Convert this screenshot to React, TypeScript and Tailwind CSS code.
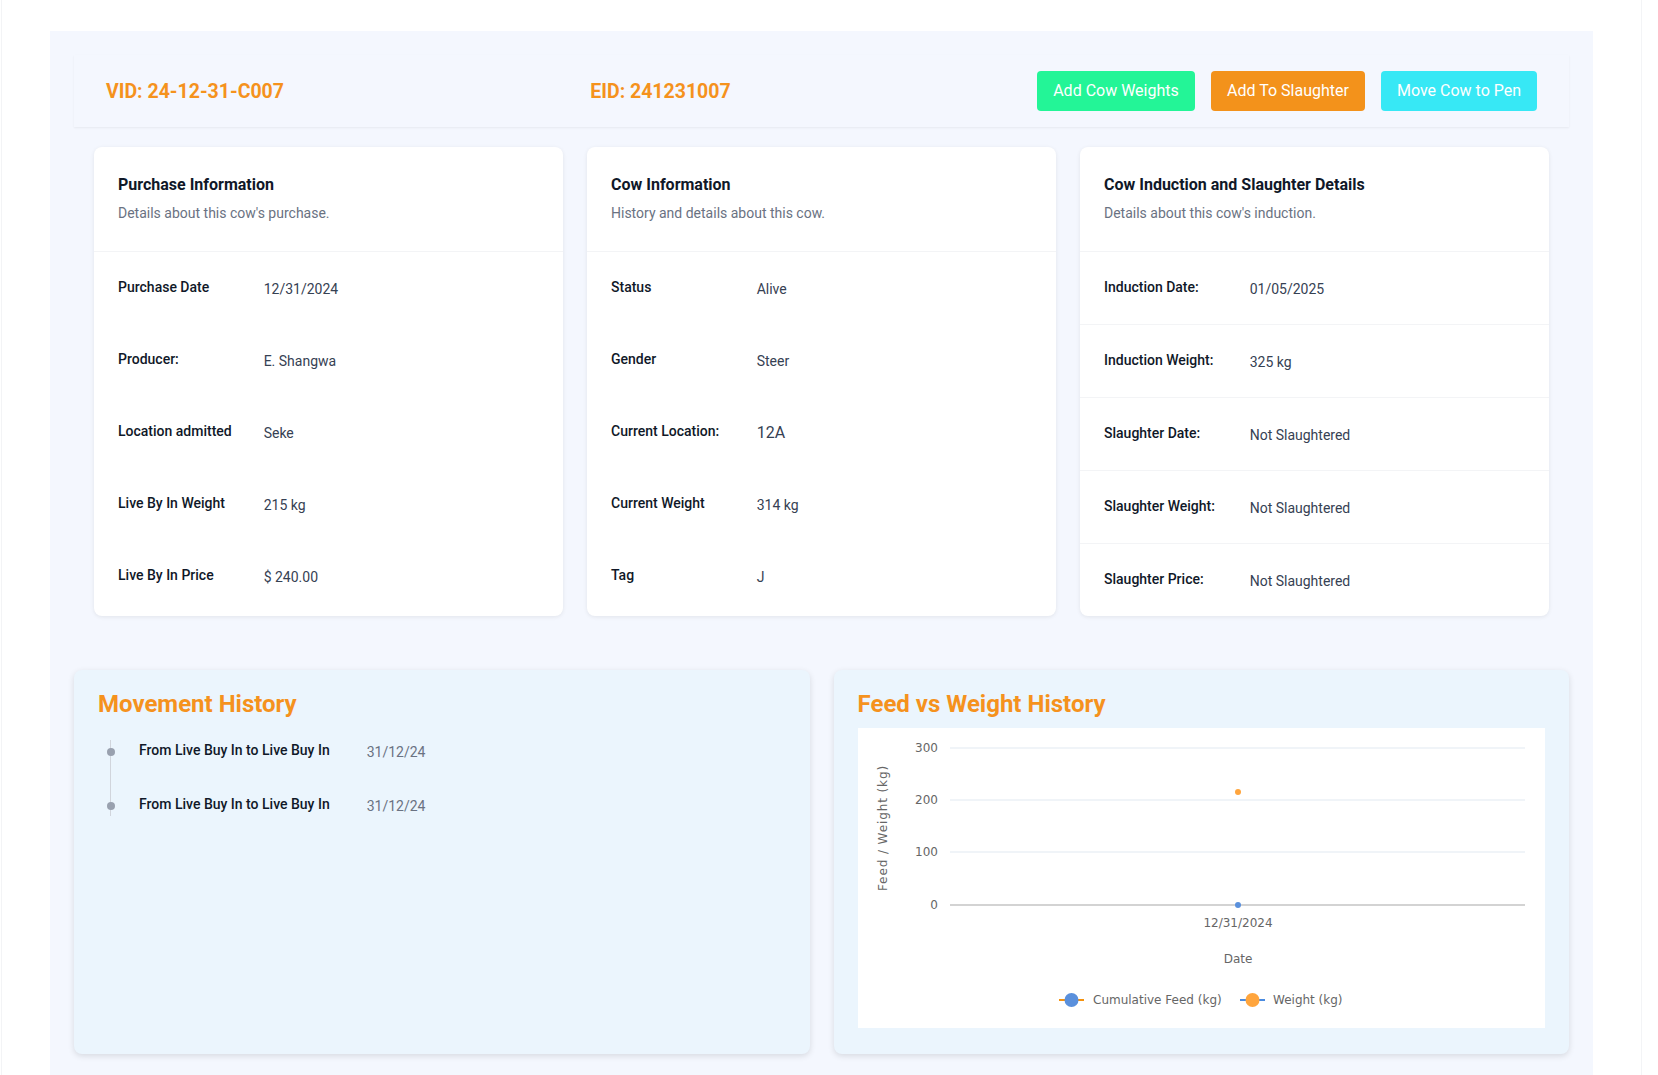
import React from 'react';

const purchase = [
  { label: 'Purchase Date', value: '12/31/2024' },
  { label: 'Producer:', value: 'E. Shangwa' },
  { label: 'Location admitted', value: 'Seke' },
  { label: 'Live By In Weight', value: '215 kg' },
  { label: 'Live By In Price', value: '$ 240.00' },
];

const cowInfo = [
  { label: 'Status', value: 'Alive' },
  { label: 'Gender', value: 'Steer' },
  { label: 'Current Location:', value: '12A', big: true },
  { label: 'Current Weight', value: '314 kg' },
  { label: 'Tag', value: 'J' },
];

const induction = [
  { label: 'Induction Date:', value: '01/05/2025' },
  { label: 'Induction Weight:', value: '325 kg' },
  { label: 'Slaughter Date:', value: 'Not Slaughtered' },
  { label: 'Slaughter Weight:', value: 'Not Slaughtered' },
  { label: 'Slaughter Price:', value: 'Not Slaughtered' },
];

const movements = [
  { text: 'From Live Buy In to Live Buy In', date: '31/12/24' },
  { text: 'From Live Buy In to Live Buy In', date: '31/12/24' },
];

type Row = { label: string; value: string; big?: boolean };

const InfoCard = ({ title, subtitle, rows, divided }: { title: string; subtitle: string; rows: Row[]; divided?: boolean }) => (
  <div className="bg-white rounded-lg shadow-[0_1px_4px_rgba(0,0,0,0.08)] overflow-hidden">
    <div className="px-6 pt-[26px] pb-7 border-b border-gray-100">
      <h3 className="text-base leading-6 font-bold text-gray-900">{title}</h3>
      <p className="mt-[6px] text-sm leading-5 text-gray-500">{subtitle}</p>
    </div>
    <dl className={divided ? 'divide-y divide-gray-100' : ''}>
      {rows.map((r) => (
        <div key={r.label} className="grid grid-cols-3 gap-4 px-6 py-[25px]">
          <dt className="text-sm leading-5 font-medium text-gray-900">{r.label}</dt>
          <dd className={`col-span-2 text-gray-700 ${r.big ? 'text-base leading-5 mt-0.5' : 'text-sm leading-5 mt-0.5'}`}>{r.value}</dd>
        </div>
      ))}
    </dl>
  </div>
);

const Chart = () => {
  const grid = [
    { y: 20, label: '300' },
    { y: 72, label: '200' },
    { y: 124, label: '100' },
  ];
  return (
    <svg width="688" height="300" className="block" style={{ fontFamily: '"DejaVu Sans", sans-serif' }}>
      {grid.map((g) => (
        <g key={g.label}>
          <line x1="92" x2="667" y1={g.y} y2={g.y} stroke="#e1e9f1" strokeWidth="1" />
          <text x="80" y={g.y} textAnchor="end" dominantBaseline="middle" fontSize="12" fill="#666">{g.label}</text>
        </g>
      ))}
      <line x1="92" x2="667" y1="177" y2="177" stroke="#c4c4c4" strokeWidth="1.5" />
      <text x="80" y="177" textAnchor="end" dominantBaseline="middle" fontSize="12" fill="#666">0</text>
      <text x="25" y="100" textAnchor="middle" dominantBaseline="middle" fontSize="12" letterSpacing="0.9" fill="#666" transform="rotate(-90 25 100)">Feed / Weight (kg)</text>
      <circle cx="380" cy="64" r="3" fill="#ffa53d" />
      <circle cx="380" cy="177" r="3" fill="#5a90dc" />
      <text x="380" y="195" textAnchor="middle" dominantBaseline="middle" fontSize="12" fill="#666">12/31/2024</text>
      <text x="380" y="231" textAnchor="middle" dominantBaseline="middle" fontSize="12" fill="#666">Date</text>
      <line x1="201" x2="226" y1="272" y2="272" stroke="#f5920f" strokeWidth="2" />
      <circle cx="213.5" cy="272" r="7" fill="#5a90dc" />
      <text x="235" y="272" dominantBaseline="middle" fontSize="12" fill="#666">Cumulative Feed (kg)</text>
      <line x1="382" x2="407" y1="272" y2="272" stroke="#4a8be0" strokeWidth="2" />
      <circle cx="394.5" cy="272" r="7" fill="#ffa53d" />
      <text x="415" y="272" dominantBaseline="middle" fontSize="12" fill="#666">Weight (kg)</text>
    </svg>
  );
};

export default function App() {
  return (
    <div className="min-h-screen bg-white font-['Roboto',sans-serif] pl-px">
      <div className="w-[1641px] min-h-screen border-x border-gray-100 pt-[31px]">
        <div className="mx-12 bg-[#f4f7fe] px-6 pt-6 pb-12">
          {/* header */}
          <div className="h-[72px] px-8 flex items-center justify-between bg-[#f4f7fe] shadow-[0_1px_2px_rgba(0,0,0,0.06)]">
            <h1 className="text-[19.5px] leading-7 mt-0.5 font-bold text-[#f5921d]">VID: 24-12-31-C007</h1>
            <h2 className="text-[19.5px] leading-7 mt-0.5 font-bold text-[#f5921d]">EID: 241231007</h2>
            <div className="flex gap-4">
              <button className="h-10 w-[158px] rounded bg-[#23f597] text-white text-base">Add Cow Weights</button>
              <button className="h-10 w-[154px] rounded bg-[#f3921b] text-white text-base">Add To Slaughter</button>
              <button className="h-10 w-[156px] rounded bg-[#37e8f5] text-white text-base">Move Cow to Pen</button>
            </div>
          </div>

          {/* info cards */}
          <div className="mt-5 px-5 grid grid-cols-3 gap-6">
            <InfoCard title="Purchase Information" subtitle="Details about this cow's purchase." rows={purchase} />
            <InfoCard title="Cow Information" subtitle="History and details about this cow." rows={cowInfo} />
            <InfoCard title="Cow Induction and Slaughter Details" subtitle="Details about this cow's induction." rows={induction} divided />
          </div>

          {/* history */}
          <div className="mt-[54px] grid grid-cols-2 gap-6">
            <div className="h-[384px] rounded-lg bg-[#ebf5fd] shadow-[0_2px_6px_rgba(0,0,0,0.12)] px-6 pt-[18px]">
              <h2 className="text-2xl leading-8 font-bold text-[#f5921d]">Movement History</h2>
              <ol className="relative ml-3 mt-5 border-l border-gray-300">
                {movements.map((m, i) => (
                  <li key={i} className="relative pl-7 mb-8 flex items-start gap-[37px]">
                    <span className="absolute -left-[4.5px] top-[8px] w-[8px] h-[8px] rounded-full bg-gray-400" />
                    <span className="text-sm leading-5 font-medium text-gray-900">{m.text}</span>
                    <span className="text-sm leading-5 text-gray-500 mt-0.5">{m.date}</span>
                  </li>
                ))}
              </ol>
            </div>
            <div className="h-[384px] rounded-lg bg-[#ebf5fd] shadow-[0_2px_6px_rgba(0,0,0,0.12)] px-6 pt-[18px] pb-[26px]">
              <h2 className="text-2xl leading-8 font-bold text-[#f5921d]">Feed vs Weight History</h2>
              <div className="mt-2 bg-white h-[300px]">
                <Chart />
              </div>
            </div>
          </div>
        </div>
      </div>
    </div>
  );
}
